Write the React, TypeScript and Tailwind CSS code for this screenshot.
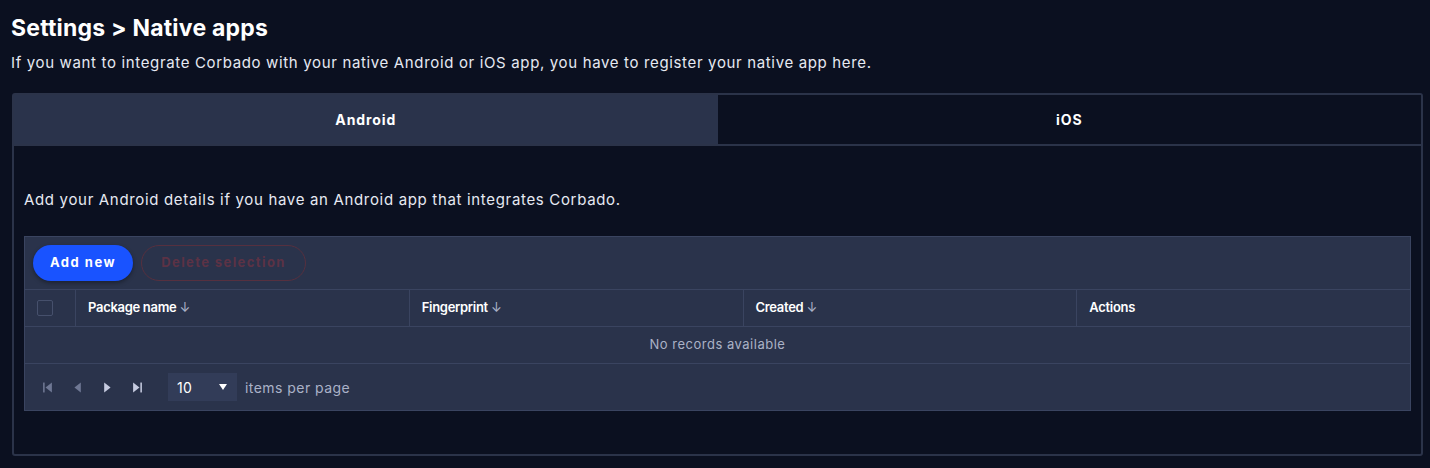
import { useState } from "react";

const COLUMNS = ["Package name", "Fingerprint", "Created", "Actions"];

function PagerIcon({ kind }: { kind: "first" | "prev" | "next" | "last" }) {
  return (
    <svg width="11" height="11" viewBox="0 0 10 10" className="fill-current">
      {kind === "first" && (
        <>
          <rect x="1" y="0.5" width="1.4" height="9" />
          <path d="M9 0.5 L3.2 5 L9 9.5 Z" />
        </>
      )}
      {kind === "prev" && <path d="M8 0.5 L2.2 5 L8 9.5 Z" />}
      {kind === "next" && <path d="M2 0.5 L7.8 5 L2 9.5 Z" />}
      {kind === "last" && (
        <>
          <path d="M1 0.5 L6.8 5 L1 9.5 Z" />
          <rect x="7.6" y="0.5" width="1.4" height="9" />
        </>
      )}
    </svg>
  );
}

export default function App() {
  const [tab, setTab] = useState<"android" | "ios">("android");
  const [perPage, setPerPage] = useState("10");

  return (
    <div className="min-h-[468px] bg-[#0b1020] pl-[11px] pt-[14px] text-white" style={{ fontFamily: "Inter, 'Open Sans', sans-serif" }}>
      <h1 className="text-[23px] font-bold leading-[28px] tracking-[0.2px]">Settings &gt; Native apps</h1>
      <p className="mt-[11px] text-[15px] leading-[20px] text-[#e6e9f2] tracking-[0.65px]">
        If you want to integrate Corbado with your native Android or iOS app, you have to register your native app here.
      </p>

      <div className="ml-px mt-[20px] w-[1411px] rounded-[3px] border-2 border-[#2b3349]">
        {/* Tabs */}
        <div className="flex h-[51px] border-b-2 border-[#2b3349]">
          <button
            onClick={() => setTab("android")}
            className={`flex-1 text-[14px] font-bold tracking-[0.9px] ${tab === "android" ? "bg-[#2a334b]" : "bg-[#0b1020]"}`}
          >
            Android
          </button>
          <button
            onClick={() => setTab("ios")}
            className={`flex-1 text-[14px] font-bold tracking-[0.9px] ${tab === "ios" ? "bg-[#2a334b]" : "bg-[#0b1020]"}`}
          >
            iOS
          </button>
        </div>

        {/* Content */}
        <div className="px-[10px] pb-[43px] pt-[44px]">
          <p className="text-[15px] leading-[20px] text-[#e6e9f2] tracking-[0.67px]">
            Add your Android details if you have an Android app that integrates Corbado.
          </p>

          <div className="mt-[26px] border border-[#3a4460] bg-[#2a334b]">
            {/* Toolbar */}
            <div className="flex h-[53px] items-center gap-[8px] border-b border-[#3a4460] px-[8px]">
              <button className="h-[36px] w-[100px] rounded-full bg-[#1953ff] text-[13px] font-bold tracking-[1.5px] text-white shadow-[0_2px_4px_rgba(0,0,0,0.35)]">
                Add new
              </button>
              <button disabled className="h-[36px] w-[165px] rounded-full border border-[#56303f] text-[13px] font-bold tracking-[1.4px] text-[#5c3245]">
                Delete selection
              </button>
            </div>

            {/* Header */}
            <div className="flex h-[37px] border-b border-[#3a4460]">
              <div className="flex w-[51px] items-center border-r border-[#3a4460] pl-[12px]">
                <div className="h-[16px] w-[16px] rounded-[2px] border border-[#46506c]" />
              </div>
              {COLUMNS.map((c, i) => (
                <div
                  key={c}
                  className={`flex flex-1 items-center px-[12px] text-[13px] font-semibold tracking-[-0.3px] ${i < 3 ? "border-r border-[#3a4460]" : ""}`}
                >
                  {c}
                  {i < 3 && <span className="ml-[3px] font-normal text-[#aab2c8]">↓</span>}
                </div>
              ))}
            </div>

            {/* Empty row */}
            <div className="flex h-[37px] items-center justify-center border-b border-[#3a4460] text-[13px] tracking-[0.5px] text-[#aab2c6]">
              No records available
            </div>

            {/* Pager */}
            <div className="flex h-[46px] items-center pl-[17px] text-[#aab2c8]">
              <div className="flex items-center gap-[19px]">
                <span className="text-[#6f7894]"><PagerIcon kind="first" /></span>
                <span className="text-[#6f7894]"><PagerIcon kind="prev" /></span>
                <span className="text-[#c6cbe0]"><PagerIcon kind="next" /></span>
                <span className="text-[#c6cbe0]"><PagerIcon kind="last" /></span>
              </div>
              <div className="relative ml-[25px] flex h-[28px] w-[69px] items-center bg-[#323c58] pl-[9px]">
                <select
                  value={perPage}
                  onChange={(e) => setPerPage(e.target.value)}
                  className="absolute inset-0 cursor-pointer opacity-0"
                >
                  <option>5</option>
                  <option>10</option>
                  <option>20</option>
                </select>
                <span className="text-[14px] tracking-[0.4px] text-white">{perPage}</span>
                <svg width="8" height="6" viewBox="0 0 8 6" className="ml-auto mr-[10px] fill-white">
                  <path d="M0 0 H8 L4 6 Z" />
                </svg>
              </div>
              <span className="ml-[8px] text-[14px] tracking-[0.45px] text-[#aab2c8]">items per page</span>
            </div>
          </div>
        </div>
      </div>
    </div>
  );
}
